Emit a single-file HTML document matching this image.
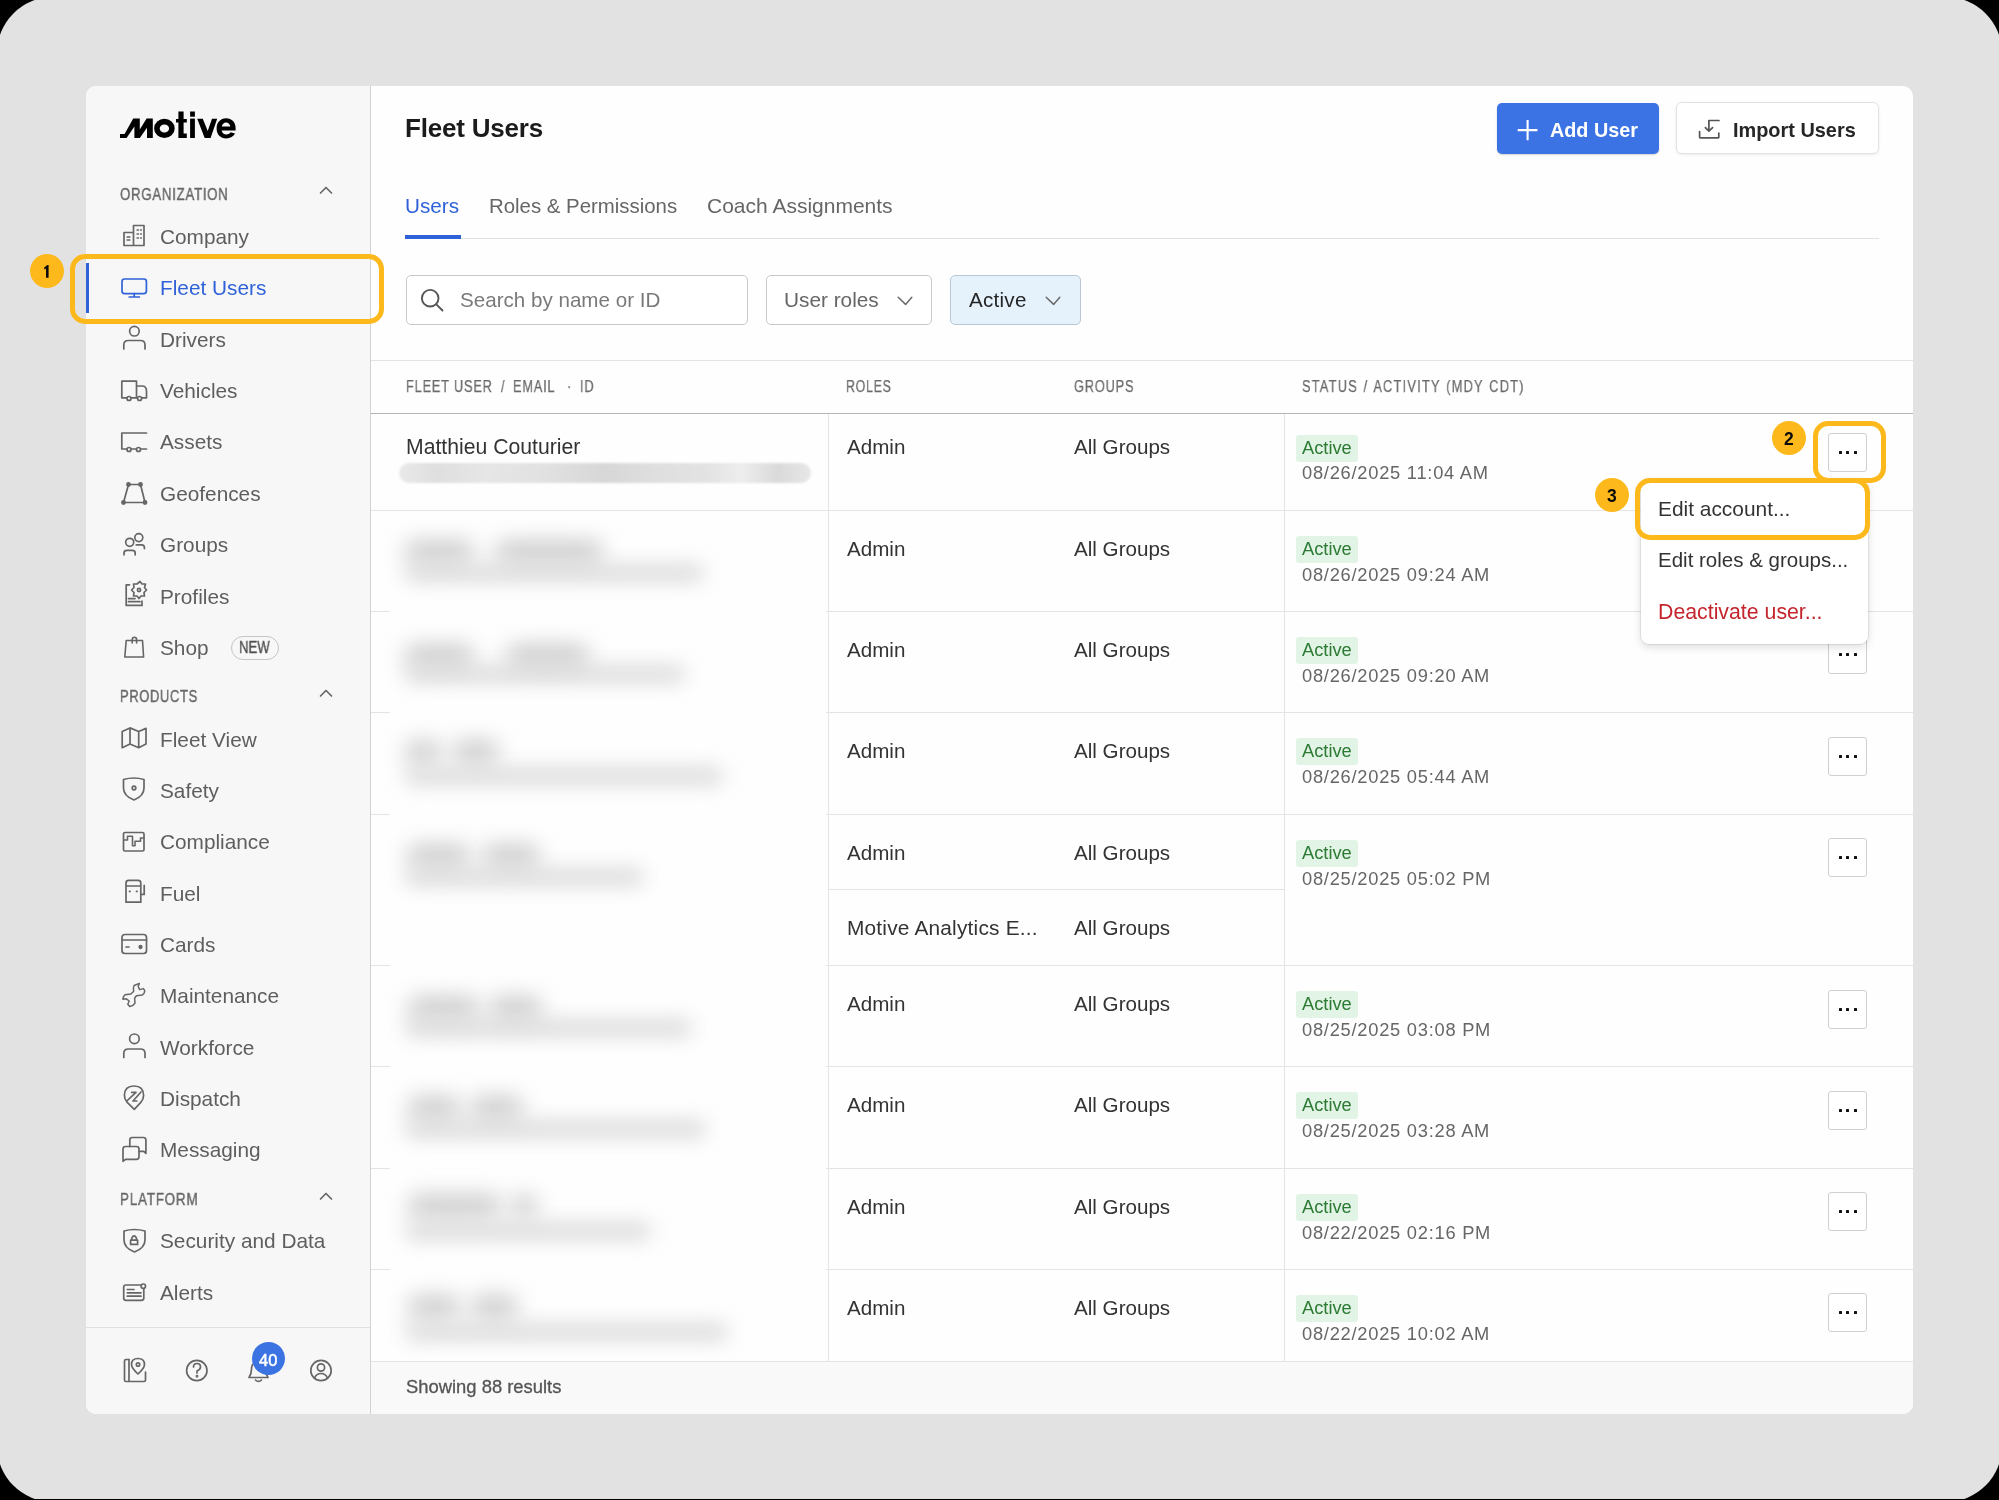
<!DOCTYPE html>
<html><head><meta charset="utf-8"><title>Fleet Users</title>
<style>
html,body{margin:0;padding:0}
body{width:1999px;height:1500px;background:#000;position:relative;overflow:hidden;font-family:"Liberation Sans",sans-serif}
.r{position:absolute}
.t{position:absolute;line-height:0;white-space:nowrap;will-change:transform}
</style></head><body>
<div class="r" style="left:-3px;top:-3px;width:2005px;height:1505px;background:#e2e2e2;border-radius:56px"></div>
<div class="r" style="left:85.5px;top:85.5px;width:1827.5px;height:1328.5px;background:#fefefe;border-radius:10px;overflow:hidden"><div class="r" style="left:0;top:0;width:284.5px;height:100%;background:#f7f7f7;border-right:1px solid #d2d2d2"></div><div class="r" style="left:285.5px;top:1275.5px;width:1600px;height:60px;background:#f9f9f9;border-top:1px solid #e4e4e4"></div></div>
<svg class="r" style="left:0;top:0" width="1999" height="300" viewBox="0 0 1999 300">
<g fill="#000">
<path d="M120 138 L120 134 L124.6 134 L133.2 118.6 L139.8 118.6 L139.8 129.4 L146.6 118.6 L152.8 118.6 L152.8 138 L147 138 L147 127.8 L139.8 138 L134.4 138 L134.4 126.6 L126.6 138 Z"/>
<ellipse cx="164.4" cy="128.4" rx="7.5" ry="6.8" fill="none" stroke="#000" stroke-width="5.6"/>
<path d="M178.4 111.5 H183.6 V119 H186.8 V122.4 H183.6 V133.6 H186.8 V138 H178.4 V122.4 H176 V119 H178.4 Z"/>
<rect x="190.1" y="118.6" width="4.8" height="19.4"/>
<rect x="190.1" y="111.5" width="4.8" height="5.2"/>
<path d="M197.2 118.8 L202.8 118.8 L207.7 131 L212 118.8 L217.2 118.8 L210.6 138 L204.7 138 Z"/>
<path d="M226 118.3 C 232 118.3 235.6 122.6 235.6 128.2 L235.6 130.4 L221.6 130.4 C 222.2 133 224 134.4 226.4 134.4 C 228.4 134.4 229.8 133.5 230.6 132.2 L235 133.6 C 233.6 136.6 230.4 138.4 226.2 138.4 C 220.4 138.4 216.6 134.2 216.6 128.4 C 216.6 122.6 220.4 118.3 226 118.3 Z M 221.8 126.6 L 230.4 126.6 C 230 124 228.4 122.4 226 122.4 C 223.8 122.4 222.2 124 221.8 126.6 Z"/>
</g></svg>
<div class="t" style="left:120.00px;top:194.28px;font-size:16.5px;color:#666;font-weight:400;transform:scaleX(0.803);transform-origin:0 0;letter-spacing:0.9px;-webkit-text-stroke:0.4px #666">ORGANIZATION</div>
<div class="t" style="left:120.00px;top:695.98px;font-size:16.5px;color:#666;font-weight:400;transform:scaleX(0.78);transform-origin:0 0;letter-spacing:0.9px;-webkit-text-stroke:0.4px #666">PRODUCTS</div>
<div class="t" style="left:120.00px;top:1199.28px;font-size:16.5px;color:#666;font-weight:400;transform:scaleX(0.818);transform-origin:0 0;letter-spacing:0.9px;-webkit-text-stroke:0.4px #666">PLATFORM</div>
<div class="t" style="left:159.50px;top:236.79px;font-size:20.8px;color:#5e5e5e;font-weight:400;">Company</div>
<div class="t" style="left:159.50px;top:288.19px;font-size:20.8px;color:#2f62d8;font-weight:400;">Fleet Users</div>
<div class="t" style="left:159.50px;top:339.59px;font-size:20.8px;color:#5e5e5e;font-weight:400;">Drivers</div>
<div class="t" style="left:159.50px;top:390.99px;font-size:20.8px;color:#5e5e5e;font-weight:400;">Vehicles</div>
<div class="t" style="left:159.50px;top:442.39px;font-size:20.8px;color:#5e5e5e;font-weight:400;">Assets</div>
<div class="t" style="left:159.50px;top:493.79px;font-size:20.8px;color:#5e5e5e;font-weight:400;">Geofences</div>
<div class="t" style="left:159.50px;top:545.19px;font-size:20.8px;color:#5e5e5e;font-weight:400;">Groups</div>
<div class="t" style="left:159.50px;top:596.59px;font-size:20.8px;color:#5e5e5e;font-weight:400;">Profiles</div>
<div class="t" style="left:159.50px;top:647.99px;font-size:20.8px;color:#5e5e5e;font-weight:400;">Shop</div>
<div class="t" style="left:159.50px;top:739.79px;font-size:20.8px;color:#5e5e5e;font-weight:400;">Fleet View</div>
<div class="t" style="left:159.50px;top:791.09px;font-size:20.8px;color:#5e5e5e;font-weight:400;">Safety</div>
<div class="t" style="left:159.50px;top:842.39px;font-size:20.8px;color:#5e5e5e;font-weight:400;">Compliance</div>
<div class="t" style="left:159.50px;top:893.69px;font-size:20.8px;color:#5e5e5e;font-weight:400;">Fuel</div>
<div class="t" style="left:159.50px;top:944.99px;font-size:20.8px;color:#5e5e5e;font-weight:400;">Cards</div>
<div class="t" style="left:159.50px;top:996.29px;font-size:20.8px;color:#5e5e5e;font-weight:400;">Maintenance</div>
<div class="t" style="left:159.50px;top:1047.59px;font-size:20.8px;color:#5e5e5e;font-weight:400;">Workforce</div>
<div class="t" style="left:159.50px;top:1098.89px;font-size:20.8px;color:#5e5e5e;font-weight:400;">Dispatch</div>
<div class="t" style="left:159.50px;top:1150.19px;font-size:20.8px;color:#5e5e5e;font-weight:400;">Messaging</div>
<div class="t" style="left:159.50px;top:1240.79px;font-size:20.8px;color:#5e5e5e;font-weight:400;">Security and Data</div>
<div class="t" style="left:159.50px;top:1292.79px;font-size:20.8px;color:#5e5e5e;font-weight:400;">Alerts</div>
<div class="r" style="left:231.2px;top:635.6px;width:48.3px;height:24.9px;border:1.4px solid #c4c4c4;border-radius:13px;box-sizing:border-box"></div>
<div class="t" style="left:239.40px;top:648.36px;font-size:15.7px;color:#505050;font-weight:400;transform:scaleX(0.84);transform-origin:0 0;-webkit-text-stroke:0.35px #505050">NEW</div>
<div class="r" style="left:86.00px;top:262.50px;width:3.00px;height:50.50px;background:#2f62d8"></div>
<div class="r" style="left:86.00px;top:1326.50px;width:284.00px;height:1.00px;background:#e0e0e0"></div>
<svg class="r" style="left:0;top:0" width="1999" height="1500" viewBox="0 0 1999 1500">
<g fill="none" stroke="#666" stroke-width="1.7" stroke-linejoin="round" stroke-linecap="round">

<path d="M320.5 193 L326 187.5 L331.5 193"/>
<path d="M320.5 696 L326 690.5 L331.5 696"/>
<path d="M320.5 1199 L326 1193.5 L331.5 1199"/>
<!-- company -->
<path d="M133.5 245.5 V225.5 H144 V245.5 Z M124 245.5 V232.5 H133.5 M124 245.5 H144"/>
<path d="M127 237 H130 M127 240 H130 M137 230 H138.5 M140.5 230 H141.5 M137 234 H138.5 M140.5 234 H141.5 M137 238 H138.5 M140.5 238 H141.5" stroke-width="1.3"/>
<!-- monitor -->
<g stroke="#2f62d8"><rect x="122" y="279" width="24.4" height="14.6" rx="2.5"/><path d="M134.2 293.6 V297 M129.2 297 H139.4"/></g>
<!-- drivers -->
<circle cx="134.4" cy="331.2" r="4.8"/><path d="M123.8 349 V345 Q123.8 340.5 128.3 340.5 H140.5 Q145 340.5 145 345 V349"/>
<!-- vehicles -->
<path d="M121.8 397.8 V381.2 H136.5 V386 H142 Q146.5 386 146.5 391 V397.8 H142 M136.5 386 V397.8 M121.8 397.8 H127 M131 397.8 H137"/>
<circle cx="129" cy="398.5" r="2"/><circle cx="139.6" cy="398.5" r="2"/>
<!-- assets -->
<path d="M146.5 433 H121.8 V449 H126.5 M131.5 449 H136 M141 449 H146.5"/>
<circle cx="129" cy="449.5" r="2"/><circle cx="138.5" cy="449.5" r="2"/>
<!-- geofence -->
<path d="M128.5 484.5 H140.5 L145 502.5 H123.5 Z"/><g fill="#666"><circle cx="128.5" cy="484.5" r="1.6"/><circle cx="140.5" cy="484.5" r="1.6"/><circle cx="145" cy="502.5" r="1.6"/><circle cx="123.5" cy="502.5" r="1.6"/></g>
<!-- groups -->
<circle cx="129.7" cy="542.3" r="4"/><circle cx="138.8" cy="537.6" r="4"/>
<path d="M124 554.8 V553 Q124 550.4 127 550.4 H132.2 Q135.2 550.4 135.2 553 V554.8 M136.3 544.9 H141.6 Q144.4 544.9 144.4 547.6 V548.6"/>
<!-- profiles -->
<path d="M129.5 584.8 H126.2 V605.4 H142 V601.2 M128.5 598.6 H135 M128.5 601.7 H140"/>
<path d="M140 581.5 L142 584 L145.5 584 L144.5 587.5 L146.5 590 L144 592.5 L144.5 596 L141 596 L139 598.5 L137 596 L133.5 596 L134 592.5 L131.5 590 L134 587.5 L133.5 584 L137 584 Z"/>
<circle cx="139" cy="590" r="1.6"/>
<!-- shop -->
<path d="M126.2 640.5 H142.5 L143.6 657 H124.8 Z M132.2 643 V639.5 Q132.2 637.2 134.4 637.2 Q136.6 637.2 136.6 639.5 V643" stroke-width="1.6"/>
<!-- fleet view map -->
<path d="M122.2 731.5 L130 727.9 L138.7 731.5 L146 728.4 V744 L138.7 747.7 L130 744 L122.2 747.7 Z M130 727.9 V744 M138.7 731.5 V747.7"/>
<!-- safety -->
<path d="M123.5 779.5 Q134 776.5 144 779.5 V788 Q144 796 134 800 Q123.5 796 123.5 788 Z"/>
<circle cx="134" cy="788" r="1.8"/>
<!-- compliance -->
<rect x="123.5" y="832.5" width="20.5" height="18.5" rx="1.5"/>
<path d="M124 840 H127.5 V836.3 H132.5 V845.8 H135 V841.3 H140.5 V838 H143.7" stroke-width="1.6"/>
<!-- fuel -->
<path d="M126 902.2 V883 Q126 880.4 128.8 880.4 H138 Q140.8 880.4 140.8 883 V902.2 Z M126 886 H140.8 M144.2 885.4 V894.4 H140.8"/>
<path d="M129.5 891.4 H130.1 M136.5 891.4 H137.1"/>
<!-- cards -->
<rect x="122" y="934.5" width="24.5" height="19" rx="3"/>
<path d="M122 940 H146.5 M126 947 H129"/><circle cx="140.5" cy="947" r="1.3" fill="#666"/>
<!-- maintenance wrench -->
<path d="M139.3 983.4 L134.2 985.5 Q133.2 986.5 133.6 991.5 L130.8 994 L125 994.8 Q123 996 122.9 999.2 L126.3 998.8 L129.2 1001 L127.8 1004.3 L129.7 1006.6 Q133.5 1006 135 1003.2 L134.6 998.3 L136.4 995.8 L142.2 995 Q144.8 993.5 144.7 990.6 L143.4 988.6 L139.7 989.6 L138.2 986.5 Z" stroke-width="1.5"/>
<!-- workforce -->
<circle cx="134.4" cy="1038.8" r="4.8"/><path d="M123.8 1057.5 V1053.5 Q123.8 1049 128.3 1049 H140.5 Q145 1049 145 1053.5 V1057.5"/>
<!-- dispatch -->
<path d="M134.3 1109.4 L127.2 1102.4 Q124.4 1099.4 124.4 1095.6 Q124.4 1086 134 1086 Q143.6 1086 143.6 1095.6 Q143.6 1099.4 140.8 1102.4 Z"/>
<path d="M131.8 1092.4 H136 L126.8 1101 M141 1092 L133 1101 H136.8"/>
<!-- messaging -->
<path d="M129.8 1146.5 V1140 Q129.8 1137.5 132.3 1137.5 H143.4 Q145.9 1137.5 145.9 1140 V1153.3 L143.8 1151.3 H139"/>
<path d="M123 1161.3 V1149 Q123 1146.5 125.5 1146.5 H136.5 Q139 1146.5 139 1149 V1156.8 Q139 1159.3 136.5 1159.3 H125.5 Z"/>
<!-- security -->
<path d="M124 1231 Q134.5 1228 145 1231 V1240 Q145 1248 134.5 1252 Q124 1248 124 1240 Z"/>
<path d="M130.6 1240.2 H137.6 V1244.4 H130.6 Z M131.8 1240.2 V1237.8 Q134.1 1233.8 136.4 1237.8 V1240.2"/>
<!-- alerts -->
<path d="M140.6 1285 H126 Q123.7 1285 123.7 1287.3 V1298 Q123.7 1300.3 126 1300.3 H141.5 Q143.8 1300.3 143.8 1298 V1289 M127.3 1289.5 H134 M127.3 1292.8 H141 M127.3 1296.2 H141"/>
<circle cx="143.3" cy="1286.2" r="2.2"/>
<!-- bottom icons -->
<path d="M129 1359.5 H126 Q124.5 1359.5 124.5 1361 V1380 Q124.5 1381.5 126 1381.5 H144 Q145.5 1381.5 145.5 1380 V1372"/>
<path d="M129 1359.5 V1381"/>
<path d="M138 1374 Q131.5 1368 131.5 1364.5 Q131.5 1358.5 138 1358.5 Q144.5 1358.5 144.5 1364.5 Q144.5 1368 138 1374 Z"/><circle cx="138" cy="1364.5" r="1.7"/>
<circle cx="196.8" cy="1370.5" r="10.2"/>
<path d="M193.5 1367 Q193.5 1363.5 197 1363.5 Q200.5 1363.5 200.5 1367 Q200.5 1369.5 197 1371 V1373"/><circle cx="197" cy="1376.3" r="0.6" fill="#666"/>
<path d="M249 1377.5 Q251.5 1374 251.5 1369 Q251.5 1362 258.5 1362 Q265.5 1362 265.5 1369 Q265.5 1374 268 1377.5 Z M255.5 1380 Q258.5 1383 261.5 1380"/>
<circle cx="321" cy="1370.5" r="10.2"/>
<circle cx="321" cy="1367.5" r="3.6"/><path d="M314.5 1378 Q316.5 1373.5 321 1373.5 Q325.5 1373.5 327.5 1378"/>
</g>
</svg>
<div class="r" style="left:251.5px;top:1341.5px;width:33px;height:33px;border-radius:50%;background:#3b74e2"></div>
<div class="t" style="left:258.60px;top:1359.58px;font-size:16.5px;color:#fff;font-weight:400;-webkit-text-stroke:0.5px #fff">40</div>
<div class="t" style="left:405.00px;top:127.99px;font-size:26px;color:#1b1b1b;font-weight:700;letter-spacing:-0.2px">Fleet Users</div>
<div class="r" style="left:1496.8px;top:102.9px;width:162.2px;height:51px;background:#3b73e4;border-radius:5px;box-shadow:0 1px 2px rgba(0,0,0,0.18)"></div>
<svg class="r" style="left:1515px;top:118px" width="26" height="26" viewBox="0 0 26 26"><path d="M12.6 2 V22.2 M2.7 12.1 H22.5" stroke="#fff" stroke-width="2.1" fill="none"/></svg>
<div class="t" style="left:1549.50px;top:130.44px;font-size:19.8px;color:#fff;font-weight:700;">Add User</div>
<div class="r" style="left:1675.7px;top:102.3px;width:203.3px;height:51.7px;background:#fff;border:1px solid #e2e2e2;border-radius:6px;box-sizing:border-box;box-shadow:0 1px 3px rgba(0,0,0,0.08)"></div>
<svg class="r" style="left:1690px;top:112px" width="40" height="36" viewBox="0 0 40 36"><g fill="none" stroke="#555" stroke-width="1.7" stroke-linecap="round" stroke-linejoin="round"><path d="M9.6 19.6 V25.3 Q9.6 25.8 10.1 25.8 H28.3 Q28.8 25.8 28.8 25.3 V21"/><path d="M29 8.5 H18.9 V19 M15.4 15.6 L18.9 19.2 L22.6 15.6"/></g></svg>
<div class="t" style="left:1732.50px;top:130.40px;font-size:19.9px;color:#262626;font-weight:700;">Import Users</div>
<div class="t" style="left:405.00px;top:205.83px;font-size:20.7px;color:#2f62d8;font-weight:400;">Users</div>
<div class="t" style="left:489.00px;top:205.93px;font-size:20.4px;color:#666;font-weight:400;">Roles &amp; Permissions</div>
<div class="t" style="left:707.00px;top:205.72px;font-size:21.0px;color:#666;font-weight:400;">Coach Assignments</div>
<div class="r" style="left:405.00px;top:237.50px;width:1474.00px;height:1.30px;background:#e2e2e2"></div>
<div class="r" style="left:405.00px;top:235.00px;width:56.00px;height:3.50px;background:#2f62d8"></div>
<div class="r" style="left:406px;top:274.7px;width:341.6px;height:50.3px;border:1px solid #c9c9c9;border-radius:5px;box-sizing:border-box;background:#fff"></div>
<svg class="r" style="left:415px;top:283px" width="36" height="36" viewBox="0 0 36 36"><g fill="none" stroke="#555" stroke-width="1.9" stroke-linecap="round"><circle cx="15.2" cy="15.2" r="8.3"/><path d="M21.3 21.3 L27.5 27.5"/></g></svg>
<div class="t" style="left:460.00px;top:299.86px;font-size:20.6px;color:#7a7a7a;font-weight:400;">Search by name or ID</div>
<div class="r" style="left:766px;top:274.7px;width:166px;height:50.3px;border:1px solid #c9c9c9;border-radius:5px;box-sizing:border-box;background:#fff"></div>
<div class="t" style="left:783.50px;top:299.79px;font-size:20.8px;color:#666;font-weight:400;">User roles</div>
<svg class="r" style="left:890px;top:285px" width="30" height="30" viewBox="0 0 30 30"><path d="M8.2 12.3 L15.6 19.4 L21.8 12.3" fill="none" stroke="#6a6a6a" stroke-width="1.5" stroke-linecap="round" stroke-linejoin="round"/></svg>
<div class="r" style="left:950px;top:274.5px;width:130.5px;height:50.5px;border:1px solid #b8c7d3;border-radius:5px;box-sizing:border-box;background:#e5f2fc"></div>
<div class="t" style="left:968.80px;top:300.16px;font-size:20.6px;color:#252525;font-weight:400;letter-spacing:0.25px">Active</div>
<svg class="r" style="left:1038px;top:285px" width="30" height="30" viewBox="0 0 30 30"><path d="M8.2 12.3 L15.6 19.4 L21.8 12.3" fill="none" stroke="#6a6a6a" stroke-width="1.5" stroke-linecap="round" stroke-linejoin="round"/></svg>
<div class="r" style="left:371.00px;top:360.00px;width:1542.00px;height:1.00px;background:#e3e3e3"></div>
<div class="t" style="left:405.50px;top:387.16px;font-size:16px;color:#6a6a6a;font-weight:400;transform:scaleX(0.8);transform-origin:0 0;-webkit-text-stroke:0.25px #6a6a6a;letter-spacing:1px">FLEET USER</div>
<div class="t" style="left:500.50px;top:387.16px;font-size:16px;color:#6a6a6a;font-weight:400;transform:scaleX(0.8);transform-origin:0 0;-webkit-text-stroke:0.25px #6a6a6a;letter-spacing:1px">/</div>
<div class="t" style="left:513.00px;top:387.16px;font-size:16px;color:#6a6a6a;font-weight:400;transform:scaleX(0.8);transform-origin:0 0;-webkit-text-stroke:0.25px #6a6a6a;letter-spacing:1px">EMAIL</div>
<div class="t" style="left:566.50px;top:387.16px;font-size:16px;color:#6a6a6a;font-weight:400;transform:scaleX(0.8);transform-origin:0 0;-webkit-text-stroke:0.25px #6a6a6a;letter-spacing:1px">·</div>
<div class="t" style="left:580.20px;top:387.16px;font-size:16px;color:#6a6a6a;font-weight:400;transform:scaleX(0.8);transform-origin:0 0;-webkit-text-stroke:0.25px #6a6a6a;letter-spacing:1px">ID</div>
<div class="t" style="left:845.80px;top:387.16px;font-size:16px;color:#6a6a6a;font-weight:400;transform:scaleX(0.77);transform-origin:0 0;-webkit-text-stroke:0.25px #6a6a6a;letter-spacing:1px">ROLES</div>
<div class="t" style="left:1074.00px;top:387.16px;font-size:16px;color:#6a6a6a;font-weight:400;transform:scaleX(0.8);transform-origin:0 0;-webkit-text-stroke:0.25px #6a6a6a;letter-spacing:1px">GROUPS</div>
<div class="t" style="left:1302.00px;top:387.16px;font-size:16px;color:#6a6a6a;font-weight:400;transform:scaleX(0.8);transform-origin:0 0;word-spacing:1px;letter-spacing:1.55px;-webkit-text-stroke:0.25px #6a6a6a">STATUS / ACTIVITY (MDY CDT)</div>
<div class="r" style="left:371.00px;top:412.60px;width:1542.00px;height:1.60px;background:#b5b5b5"></div>
<div class="r" style="left:828.00px;top:414.00px;width:1.00px;height:947.00px;background:#e4e4e4"></div>
<div class="r" style="left:1284.00px;top:414.00px;width:1.00px;height:947.00px;background:#e4e4e4"></div>
<div class="t" style="left:847.00px;top:446.86px;font-size:20.6px;color:#333;font-weight:400;">Admin</div><div class="t" style="left:1074.00px;top:446.86px;font-size:20.6px;color:#333;font-weight:400;">All Groups</div><div class="r" style="left:1296.40px;top:434.60px;width:61.30px;height:27.20px;background:#e2f4e5;border-radius:3px"></div><div class="t" style="left:1302.00px;top:447.76px;font-size:18.3px;color:#2c7a34;font-weight:400;">Active</div><div class="t" style="left:1302.20px;top:473.26px;font-size:18.3px;color:#666;font-weight:400;letter-spacing:0.75px">08/26/2025 11:04 AM</div><div class="r" style="left:1828.20px;top:433.30px;width:38.80px;height:39.00px;border:1px solid #cfcfcf;border-radius:3px;box-sizing:border-box;background:#fff"></div><div class="r" style="left:1838.50px;top:451.40px;width:3.00px;height:3.00px;background:#111;border-radius:0.5px"></div><div class="r" style="left:1846.00px;top:451.40px;width:3.00px;height:3.00px;background:#111;border-radius:0.5px"></div><div class="r" style="left:1853.50px;top:451.40px;width:3.00px;height:3.00px;background:#111;border-radius:0.5px"></div>
<div class="t" style="left:847.00px;top:548.96px;font-size:20.6px;color:#333;font-weight:400;">Admin</div><div class="t" style="left:1074.00px;top:548.96px;font-size:20.6px;color:#333;font-weight:400;">All Groups</div><div class="r" style="left:1296.40px;top:535.80px;width:61.30px;height:27.20px;background:#e2f4e5;border-radius:3px"></div><div class="t" style="left:1302.00px;top:548.96px;font-size:18.3px;color:#2c7a34;font-weight:400;">Active</div><div class="t" style="left:1302.20px;top:574.96px;font-size:18.3px;color:#666;font-weight:400;letter-spacing:0.75px">08/26/2025 09:24 AM</div><div class="r" style="left:1828.20px;top:534.30px;width:38.80px;height:39.00px;border:1px solid #cfcfcf;border-radius:3px;box-sizing:border-box;background:#fff"></div><div class="r" style="left:1838.50px;top:552.40px;width:3.00px;height:3.00px;background:#111;border-radius:0.5px"></div><div class="r" style="left:1846.00px;top:552.40px;width:3.00px;height:3.00px;background:#111;border-radius:0.5px"></div><div class="r" style="left:1853.50px;top:552.40px;width:3.00px;height:3.00px;background:#111;border-radius:0.5px"></div>
<div class="r" style="left:371.00px;top:510.00px;width:1542.00px;height:1.00px;background:#e4e4e4"></div>
<div class="t" style="left:847.00px;top:649.96px;font-size:20.6px;color:#333;font-weight:400;">Admin</div><div class="t" style="left:1074.00px;top:649.96px;font-size:20.6px;color:#333;font-weight:400;">All Groups</div><div class="r" style="left:1296.40px;top:636.80px;width:61.30px;height:27.20px;background:#e2f4e5;border-radius:3px"></div><div class="t" style="left:1302.00px;top:649.96px;font-size:18.3px;color:#2c7a34;font-weight:400;">Active</div><div class="t" style="left:1302.20px;top:675.96px;font-size:18.3px;color:#666;font-weight:400;letter-spacing:0.75px">08/26/2025 09:20 AM</div><div class="r" style="left:1828.20px;top:635.30px;width:38.80px;height:39.00px;border:1px solid #cfcfcf;border-radius:3px;box-sizing:border-box;background:#fff"></div><div class="r" style="left:1838.50px;top:653.40px;width:3.00px;height:3.00px;background:#111;border-radius:0.5px"></div><div class="r" style="left:1846.00px;top:653.40px;width:3.00px;height:3.00px;background:#111;border-radius:0.5px"></div><div class="r" style="left:1853.50px;top:653.40px;width:3.00px;height:3.00px;background:#111;border-radius:0.5px"></div>
<div class="r" style="left:371.00px;top:611.00px;width:1542.00px;height:1.00px;background:#e4e4e4"></div>
<div class="t" style="left:847.00px;top:751.46px;font-size:20.6px;color:#333;font-weight:400;">Admin</div><div class="t" style="left:1074.00px;top:751.46px;font-size:20.6px;color:#333;font-weight:400;">All Groups</div><div class="r" style="left:1296.40px;top:738.30px;width:61.30px;height:27.20px;background:#e2f4e5;border-radius:3px"></div><div class="t" style="left:1302.00px;top:751.46px;font-size:18.3px;color:#2c7a34;font-weight:400;">Active</div><div class="t" style="left:1302.20px;top:777.46px;font-size:18.3px;color:#666;font-weight:400;letter-spacing:0.75px">08/26/2025 05:44 AM</div><div class="r" style="left:1828.20px;top:736.80px;width:38.80px;height:39.00px;border:1px solid #cfcfcf;border-radius:3px;box-sizing:border-box;background:#fff"></div><div class="r" style="left:1838.50px;top:754.90px;width:3.00px;height:3.00px;background:#111;border-radius:0.5px"></div><div class="r" style="left:1846.00px;top:754.90px;width:3.00px;height:3.00px;background:#111;border-radius:0.5px"></div><div class="r" style="left:1853.50px;top:754.90px;width:3.00px;height:3.00px;background:#111;border-radius:0.5px"></div>
<div class="r" style="left:371.00px;top:712.00px;width:1542.00px;height:1.00px;background:#e4e4e4"></div>
<div class="t" style="left:847.00px;top:852.86px;font-size:20.6px;color:#333;font-weight:400;">Admin</div><div class="t" style="left:1074.00px;top:852.86px;font-size:20.6px;color:#333;font-weight:400;">All Groups</div><div class="r" style="left:1296.40px;top:839.70px;width:61.30px;height:27.20px;background:#e2f4e5;border-radius:3px"></div><div class="t" style="left:1302.00px;top:852.86px;font-size:18.3px;color:#2c7a34;font-weight:400;">Active</div><div class="t" style="left:1302.20px;top:878.86px;font-size:18.3px;color:#666;font-weight:400;letter-spacing:0.75px">08/25/2025 05:02 PM</div><div class="r" style="left:1828.20px;top:838.20px;width:38.80px;height:39.00px;border:1px solid #cfcfcf;border-radius:3px;box-sizing:border-box;background:#fff"></div><div class="r" style="left:1838.50px;top:856.30px;width:3.00px;height:3.00px;background:#111;border-radius:0.5px"></div><div class="r" style="left:1846.00px;top:856.30px;width:3.00px;height:3.00px;background:#111;border-radius:0.5px"></div><div class="r" style="left:1853.50px;top:856.30px;width:3.00px;height:3.00px;background:#111;border-radius:0.5px"></div>
<div class="r" style="left:371.00px;top:814.00px;width:1542.00px;height:1.00px;background:#e4e4e4"></div>
<div class="t" style="left:847.00px;top:1004.26px;font-size:20.6px;color:#333;font-weight:400;">Admin</div><div class="t" style="left:1074.00px;top:1004.26px;font-size:20.6px;color:#333;font-weight:400;">All Groups</div><div class="r" style="left:1296.40px;top:991.10px;width:61.30px;height:27.20px;background:#e2f4e5;border-radius:3px"></div><div class="t" style="left:1302.00px;top:1004.26px;font-size:18.3px;color:#2c7a34;font-weight:400;">Active</div><div class="t" style="left:1302.20px;top:1030.26px;font-size:18.3px;color:#666;font-weight:400;letter-spacing:0.75px">08/25/2025 03:08 PM</div><div class="r" style="left:1828.20px;top:989.60px;width:38.80px;height:39.00px;border:1px solid #cfcfcf;border-radius:3px;box-sizing:border-box;background:#fff"></div><div class="r" style="left:1838.50px;top:1007.70px;width:3.00px;height:3.00px;background:#111;border-radius:0.5px"></div><div class="r" style="left:1846.00px;top:1007.70px;width:3.00px;height:3.00px;background:#111;border-radius:0.5px"></div><div class="r" style="left:1853.50px;top:1007.70px;width:3.00px;height:3.00px;background:#111;border-radius:0.5px"></div>
<div class="r" style="left:371.00px;top:965.00px;width:1542.00px;height:1.00px;background:#e4e4e4"></div>
<div class="t" style="left:847.00px;top:1105.46px;font-size:20.6px;color:#333;font-weight:400;">Admin</div><div class="t" style="left:1074.00px;top:1105.46px;font-size:20.6px;color:#333;font-weight:400;">All Groups</div><div class="r" style="left:1296.40px;top:1092.30px;width:61.30px;height:27.20px;background:#e2f4e5;border-radius:3px"></div><div class="t" style="left:1302.00px;top:1105.46px;font-size:18.3px;color:#2c7a34;font-weight:400;">Active</div><div class="t" style="left:1302.20px;top:1131.46px;font-size:18.3px;color:#666;font-weight:400;letter-spacing:0.75px">08/25/2025 03:28 AM</div><div class="r" style="left:1828.20px;top:1090.80px;width:38.80px;height:39.00px;border:1px solid #cfcfcf;border-radius:3px;box-sizing:border-box;background:#fff"></div><div class="r" style="left:1838.50px;top:1108.90px;width:3.00px;height:3.00px;background:#111;border-radius:0.5px"></div><div class="r" style="left:1846.00px;top:1108.90px;width:3.00px;height:3.00px;background:#111;border-radius:0.5px"></div><div class="r" style="left:1853.50px;top:1108.90px;width:3.00px;height:3.00px;background:#111;border-radius:0.5px"></div>
<div class="r" style="left:371.00px;top:1066.00px;width:1542.00px;height:1.00px;background:#e4e4e4"></div>
<div class="t" style="left:847.00px;top:1206.66px;font-size:20.6px;color:#333;font-weight:400;">Admin</div><div class="t" style="left:1074.00px;top:1206.66px;font-size:20.6px;color:#333;font-weight:400;">All Groups</div><div class="r" style="left:1296.40px;top:1193.50px;width:61.30px;height:27.20px;background:#e2f4e5;border-radius:3px"></div><div class="t" style="left:1302.00px;top:1206.66px;font-size:18.3px;color:#2c7a34;font-weight:400;">Active</div><div class="t" style="left:1302.20px;top:1232.66px;font-size:18.3px;color:#666;font-weight:400;letter-spacing:0.75px">08/22/2025 02:16 PM</div><div class="r" style="left:1828.20px;top:1192.00px;width:38.80px;height:39.00px;border:1px solid #cfcfcf;border-radius:3px;box-sizing:border-box;background:#fff"></div><div class="r" style="left:1838.50px;top:1210.10px;width:3.00px;height:3.00px;background:#111;border-radius:0.5px"></div><div class="r" style="left:1846.00px;top:1210.10px;width:3.00px;height:3.00px;background:#111;border-radius:0.5px"></div><div class="r" style="left:1853.50px;top:1210.10px;width:3.00px;height:3.00px;background:#111;border-radius:0.5px"></div>
<div class="r" style="left:371.00px;top:1168.00px;width:1542.00px;height:1.00px;background:#e4e4e4"></div>
<div class="t" style="left:847.00px;top:1307.86px;font-size:20.6px;color:#333;font-weight:400;">Admin</div><div class="t" style="left:1074.00px;top:1307.86px;font-size:20.6px;color:#333;font-weight:400;">All Groups</div><div class="r" style="left:1296.40px;top:1294.70px;width:61.30px;height:27.20px;background:#e2f4e5;border-radius:3px"></div><div class="t" style="left:1302.00px;top:1307.86px;font-size:18.3px;color:#2c7a34;font-weight:400;">Active</div><div class="t" style="left:1302.20px;top:1333.86px;font-size:18.3px;color:#666;font-weight:400;letter-spacing:0.75px">08/22/2025 10:02 AM</div><div class="r" style="left:1828.20px;top:1293.20px;width:38.80px;height:39.00px;border:1px solid #cfcfcf;border-radius:3px;box-sizing:border-box;background:#fff"></div><div class="r" style="left:1838.50px;top:1311.30px;width:3.00px;height:3.00px;background:#111;border-radius:0.5px"></div><div class="r" style="left:1846.00px;top:1311.30px;width:3.00px;height:3.00px;background:#111;border-radius:0.5px"></div><div class="r" style="left:1853.50px;top:1311.30px;width:3.00px;height:3.00px;background:#111;border-radius:0.5px"></div>
<div class="r" style="left:371.00px;top:1269.00px;width:1542.00px;height:1.00px;background:#e4e4e4"></div>
<div class="r" style="left:829.00px;top:889.00px;width:455.00px;height:1.00px;background:#e4e4e4"></div>
<div class="t" style="left:847.00px;top:927.78px;font-size:20.85px;color:#333;font-weight:400;letter-spacing:0.2px">Motive Analytics E...</div>
<div class="t" style="left:1074.00px;top:927.86px;font-size:20.6px;color:#333;font-weight:400;">All Groups</div>
<div class="t" style="left:405.50px;top:446.65px;font-size:21.2px;color:#333;font-weight:400;">Matthieu Couturier</div>
<div class="r" style="left:398.5px;top:463px;width:412.5px;height:19.5px;border-radius:10px;background:linear-gradient(90deg,#e9e9e9 0%,#dfdfdf 9%,#e6e6e6 21%,#e1e1e1 36%,#d7d7d7 50%,#dfdfdf 62%,#e3e3e3 75%,#ededed 83%,#dadada 92%,#e7e7e7 100%);filter:blur(1px)"></div>
<div class="r" style="left:390px;top:511px;width:436px;height:850px;background:#fefefe"></div>
<div class="r" style="left:405.0px;top:541.0px;width:68.5px;height:22px;background:#cacaca;filter:blur(11px);border-radius:11px"></div>
<div class="r" style="left:494.7px;top:541.0px;width:108.3px;height:22px;background:#cacaca;filter:blur(11px);border-radius:11px"></div>
<div class="r" style="left:405px;top:565.0px;width:299.0px;height:16px;background:#d7d7d7;filter:blur(10px);border-radius:8px"></div>
<div class="r" style="left:405.0px;top:644.6px;width:68.5px;height:22px;background:#cacaca;filter:blur(11px);border-radius:11px"></div>
<div class="r" style="left:506.0px;top:644.6px;width:83.0px;height:22px;background:#cacaca;filter:blur(11px);border-radius:11px"></div>
<div class="r" style="left:405px;top:666.0px;width:280.0px;height:16px;background:#d7d7d7;filter:blur(10px);border-radius:8px"></div>
<div class="r" style="left:405.0px;top:741.0px;width:35.6px;height:22px;background:#cacaca;filter:blur(11px);border-radius:11px"></div>
<div class="r" style="left:452.0px;top:741.0px;width:47.0px;height:22px;background:#cacaca;filter:blur(11px);border-radius:11px"></div>
<div class="r" style="left:405px;top:767.6px;width:318.0px;height:16px;background:#d7d7d7;filter:blur(10px);border-radius:8px"></div>
<div class="r" style="left:407.0px;top:845.0px;width:63.0px;height:22px;background:#cacaca;filter:blur(11px);border-radius:11px"></div>
<div class="r" style="left:482.0px;top:845.0px;width:58.0px;height:22px;background:#cacaca;filter:blur(11px);border-radius:11px"></div>
<div class="r" style="left:405px;top:868.7px;width:239.0px;height:16px;background:#d7d7d7;filter:blur(10px);border-radius:8px"></div>
<div class="r" style="left:408.0px;top:997.0px;width:71.0px;height:22px;background:#cacaca;filter:blur(11px);border-radius:11px"></div>
<div class="r" style="left:489.0px;top:997.0px;width:53.0px;height:22px;background:#cacaca;filter:blur(11px);border-radius:11px"></div>
<div class="r" style="left:405px;top:1020.0px;width:287.0px;height:16px;background:#d7d7d7;filter:blur(10px);border-radius:8px"></div>
<div class="r" style="left:408.0px;top:1096.5px;width:52.0px;height:22px;background:#cacaca;filter:blur(11px);border-radius:11px"></div>
<div class="r" style="left:470.0px;top:1096.5px;width:53.0px;height:22px;background:#cacaca;filter:blur(11px);border-radius:11px"></div>
<div class="r" style="left:405px;top:1121.4px;width:301.0px;height:16px;background:#d7d7d7;filter:blur(10px);border-radius:8px"></div>
<div class="r" style="left:408.0px;top:1195.0px;width:93.0px;height:22px;background:#cacaca;filter:blur(11px);border-radius:11px"></div>
<div class="r" style="left:511.0px;top:1195.0px;width:26.0px;height:22px;background:#cacaca;filter:blur(11px);border-radius:11px"></div>
<div class="r" style="left:405px;top:1222.5px;width:246.0px;height:16px;background:#d7d7d7;filter:blur(10px);border-radius:8px"></div>
<div class="r" style="left:408.0px;top:1296.0px;width:52.0px;height:22px;background:#cacaca;filter:blur(11px);border-radius:11px"></div>
<div class="r" style="left:470.0px;top:1296.0px;width:47.5px;height:22px;background:#cacaca;filter:blur(11px);border-radius:11px"></div>
<div class="r" style="left:405px;top:1323.6px;width:323.0px;height:16px;background:#d7d7d7;filter:blur(10px);border-radius:8px"></div>
<div class="t" style="left:405.50px;top:1387.22px;font-size:18.4px;color:#555;font-weight:400;-webkit-text-stroke:0.3px #555">Showing 88 results</div>
<div class="r" style="left:1640.5px;top:479px;width:227.5px;height:165px;background:#fff;border-radius:8px;box-shadow:0 0 0 1px rgba(0,0,0,0.07),0 3px 8px rgba(0,0,0,0.14)"></div>
<div class="t" style="left:1657.50px;top:509.46px;font-size:20.9px;color:#333;font-weight:400;">Edit account...</div>
<div class="t" style="left:1657.50px;top:560.40px;font-size:20.5px;color:#333;font-weight:400;">Edit roles &amp; groups...</div>
<div class="t" style="left:1657.50px;top:611.62px;font-size:21.3px;color:#c4262e;font-weight:400;">Deactivate user...</div>
<div class="r" style="left:70px;top:253.8px;width:313.8px;height:70px;border:5.6px solid #fdb91c;border-radius:15px;box-sizing:border-box"></div>
<div class="r" style="left:1812.5px;top:421.3px;width:73.3px;height:62px;border:5.6px solid #fdb91c;border-radius:15px;box-sizing:border-box"></div>
<div class="r" style="left:1635px;top:478.3px;width:235px;height:62px;border:5.6px solid #fdb91c;border-radius:15px;box-sizing:border-box"></div>
<div class="r" style="left:30px;top:254px;width:34px;height:34px;border-radius:50%;background:#fdb91c"></div>
<svg class="r" style="left:38px;top:261px" width="20" height="20" viewBox="0 0 20 20"><path d="M10.6 16.7 V4 H9.4 L6.2 6.4 V8.6 L8 7.6 V16.7 Z" fill="#0a0a0a"/></svg>
<div class="r" style="left:1772px;top:421.3px;width:34px;height:34px;border-radius:50%;background:#fdb91c"></div>
<div class="t" style="left:1784.20px;top:438.54px;font-size:17.5px;color:#0a0a0a;font-weight:700;">2</div>
<div class="r" style="left:1594.7px;top:478.3px;width:34px;height:34px;border-radius:50%;background:#fdb91c"></div>
<div class="t" style="left:1606.90px;top:495.54px;font-size:17.5px;color:#0a0a0a;font-weight:700;">3</div>
<div class="r" style="left:0;top:1499px;width:1999px;height:1px;background:#000"></div>
</body></html>
